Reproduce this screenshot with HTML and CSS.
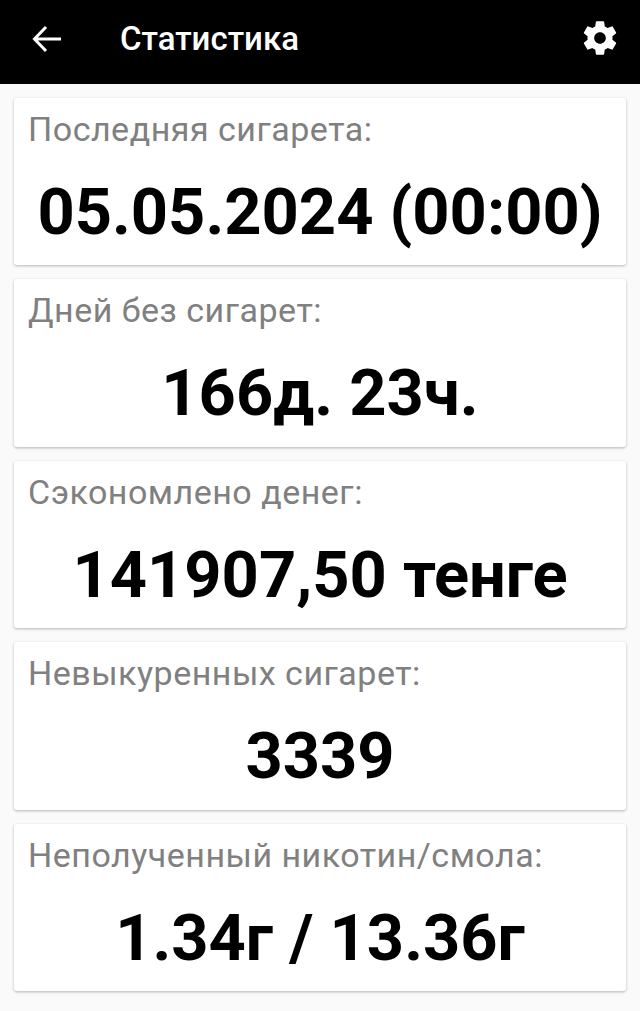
FILE: index.html
```html
<!DOCTYPE html>
<html lang="ru">
<head>
<meta charset="utf-8">
<title>Статистика</title>
<link rel="stylesheet" href="styles.css">
</head>
<body>

<div class="toolbar">
 <svg class="back" width="30" height="28" viewBox="0 0 30 28"><path d="M29 14H3M14 2L2.500 14L14 26"/></svg>
 <div class="title">Статистика</div>
 <svg class="gear" width="40" height="40" viewBox="0 0 24 24"><path d="M19.43 12.98c.04-.32.07-.64.07-.98s-.03-.66-.07-.98l2.11-1.65c.19-.15.24-.42.12-.64l-2-3.46c-.12-.22-.39-.3-.61-.22l-2.49 1c-.52-.4-1.08-.73-1.69-.98l-.38-2.65C14.46 2.18 14.25 2 14 2h-4c-.25 0-.46.18-.49.42l-.38 2.65c-.61.25-1.17.59-1.69.98l-2.49-1c-.23-.09-.49 0-.61.22l-2 3.46c-.13.22-.07.49.12.64l2.11 1.65c-.04.32-.07.65-.07.98s.03.66.07.98l-2.11 1.65c-.19.15-.24.42-.12.64l2 3.46c.12.22.39.3.61.22l2.49-1c.52.4 1.08.73 1.69.98l.38 2.65c.03.24.24.42.49.42h4c.25 0 .46-.18.49-.42l.38-2.65c.61-.25 1.17-.59 1.69-.98l2.49 1c.23.09.49 0 .61-.22l2-3.46c.12-.22.07-.49-.12-.64l-2.11-1.65zM12 15.500c-1.93 0-3.500-1.570-3.500-3.500s1.570-3.500 3.500-3.500 3.500 1.570 3.500 3.500-1.570 3.500-3.500 3.500z"/></svg>
</div>

<div class="content">
 <div class="card">
  <div class="label">Последняя сигарета:</div>
  <div class="value">05.05.2024 (00:00)</div>
 </div>
 <div class="card">
  <div class="label">Дней без сигарет:</div>
  <div class="value">166д. 23ч.</div>
 </div>
 <div class="card">
  <div class="label">Сэкономлено денег:</div>
  <div class="value">141907,50 тенге</div>
 </div>
 <div class="card">
  <div class="label">Невыкуренных сигарет:</div>
  <div class="value">3339</div>
 </div>
 <div class="card">
  <div class="label">Неполученный никотин/смола:</div>
  <div class="value">1.34г / 13.36г</div>
 </div>
</div>

</body>
</html>
```

FILE: styles.css
```css
html, body {
    margin: 0;
    padding: 0;
}
body {
    width: 640px;
    height: 1011px;
    overflow: hidden;
    background: #fafafa;
    font-family: Roboto, "Liberation Sans", sans-serif;
}

.toolbar {
    height: 84px;
    background: #000;
    color: #fff;
    display: flex;
    align-items: center;
    box-sizing: border-box;
    padding: 0 20px 8px 32px;
}
.back {
    fill: none;
    stroke: #fff;
    stroke-width: 3;
    flex: none;
    margin-top: 1px;
}
.gear {
    fill: #fff;
    flex: none;
}
.title {
    flex: 1;
    margin-left: 58px;
    font-size: 33px;
    font-weight: 500;
}

.content {
    display: flex;
    flex-direction: column;
    gap: 14px;
    padding: 13.9px 14px 0;
}
.card {
    height: 167.5px;
    box-sizing: border-box;
    background: #fff;
    border-radius: 3px;
    box-shadow: 0 1px 3px rgba(0, 0, 0, 0.28);
    padding: 10px 14px 0;
}
.label {
    font-size: 34px;
    line-height: 42px;
    color: #808080;
    letter-spacing: 0.5px;
}
.value {
    margin-top: 24px;
    font-size: 65px;
    line-height: 76px;
    font-weight: 700;
    color: #000;
    text-align: center;
    white-space: nowrap;
}
```
